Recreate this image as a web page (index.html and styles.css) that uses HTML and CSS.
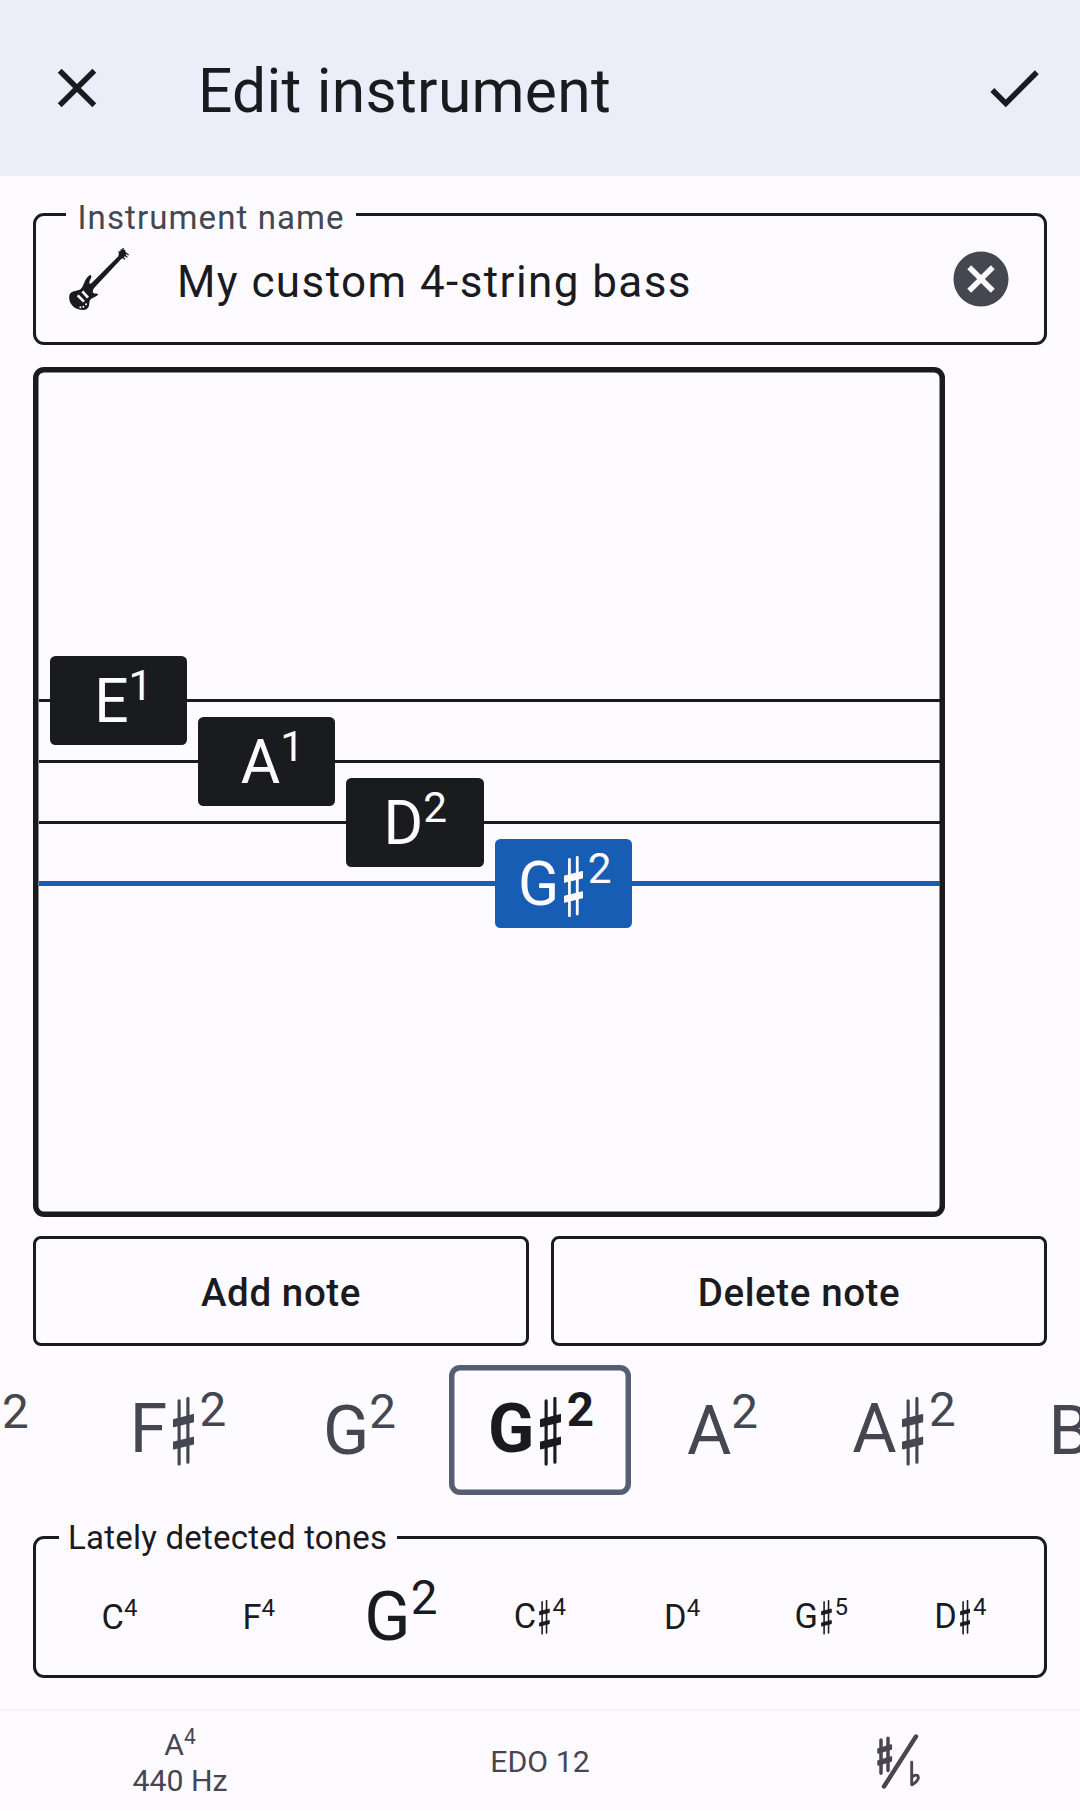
FILE: index.html
```html
<!DOCTYPE html>
<html lang="en">
<head>
<meta charset="utf-8">
<title>Edit instrument</title>
<link rel="stylesheet" href="styles.css">
</head>
<body>
<svg class="defs" aria-hidden="true">
  <symbol id="sharp" viewBox="0 0 57 182" preserveAspectRatio="none">
    <path d="M16.3 10V178M39.7 4V173" fill="none" stroke="currentColor" stroke-width="8.4" stroke-linecap="round"/>
    <path d="M2 60L55 47V65L2 78ZM2 120L55 107V124L2 137Z" fill="currentColor" stroke="currentColor" stroke-width="4" stroke-linejoin="round"/>
  </symbol>
</svg>
<div class="screen">
  <header class="app-bar">
    <svg class="icon" viewBox="0 0 24 24"><path d="M19 6.41L17.59 5 12 10.59 6.41 5 5 6.41 10.59 12 5 17.59 6.41 19 12 13.41 17.59 19 19 17.59 13.41 12z"/></svg>
    <h1 class="title">Edit instrument</h1>
    <svg class="icon" viewBox="0 0 24 24"><path d="M9 16.17L4.83 12l-1.42 1.41L9 19 21 7l-1.41-1.41z"/></svg>
  </header>

  <main class="content">
    <section class="field">
      <span class="field-label">Instrument name</span>
      <svg class="guitar" viewBox="48 47 198 198">
        <path d="M122 134C117 134 110 143 106 150C101 160 99 170 92 176C84 182 68 181 61 189C55 197 57 212 64 222C71 233 85 239 98 239C108 239 115 234 117 226C119 217 117 211 123 206C129 202 139 200 145 192C142 188 133 191 129 187C127 183 129 178 133 172L213 87L223 80L229 70L225 59L217 57L207 66L205 78L125 158C121 162 117 160 118 155C119 149 125 143 124 137Z"/>
        <path class="guitar-tuners" d="M206 63l4 5M212 57l4 5M218 53l3 5M228 68l8 6M224 74l8 7M217 80l8 7"/>
        <path class="guitar-cut" d="M97 183L114 202M83 195L102 214"/>
        <path class="guitar-dots" d="M91 231h.1M100 229h.1M108 222h.1"/>
      </svg>
      <span class="field-value">My custom 4-string bass</span>
      <svg class="icon clear" viewBox="0 0 24 24"><path d="M12 2C6.47 2 2 6.47 2 12s4.47 10 10 10 10-4.47 10-10S17.53 2 12 2zm5 13.59L15.59 17 12 13.41 8.41 17 7 15.59 10.59 12 7 8.41 8.41 7 12 10.59 15.59 7 17 8.41 13.41 12 17 15.59z"/></svg>
    </section>

    <section class="strings">
      <div class="string s1"><span class="chip"><span class="note">E<sup>1</sup></span></span></div>
      <div class="string s2"><span class="chip"><span class="note">A<sup>1</sup></span></span></div>
      <div class="string s3"><span class="chip"><span class="note">D<sup>2</sup></span></span></div>
      <div class="string s4 active"><span class="chip"><span class="note">G<svg class="sharp"><use href="#sharp"/></svg><sup>2</sup></span></span></div>
    </section>

    <div class="buttons">
      <button class="button">Add note</button>
      <button class="button">Delete note</button>
    </div>
  </main>

  <section class="picker">
    <div class="pick"><span class="note">F<sup>2</sup></span></div>
    <div class="pick"><span class="note">F<svg class="sharp"><use href="#sharp"/></svg><sup>2</sup></span></div>
    <div class="pick"><span class="note">G<sup>2</sup></span></div>
    <div class="pick selected"><span class="note">G<svg class="sharp"><use href="#sharp"/></svg><sup>2</sup></span></div>
    <div class="pick"><span class="note">A<sup>2</sup></span></div>
    <div class="pick"><span class="note">A<svg class="sharp"><use href="#sharp"/></svg><sup>2</sup></span></div>
    <div class="pick last"><span class="note">B<sup>2</sup></span></div>
  </section>

  <section class="detected">
    <span class="detected-label">Lately detected tones</span>
    <div class="tone"><span class="note">C<sup>4</sup></span></div>
    <div class="tone"><span class="note">F<sup>4</sup></span></div>
    <div class="tone large"><span class="note">G<sup>2</sup></span></div>
    <div class="tone"><span class="note">C<svg class="sharp"><use href="#sharp"/></svg><sup>4</sup></span></div>
    <div class="tone"><span class="note">D<sup>4</sup></span></div>
    <div class="tone"><span class="note">G<svg class="sharp"><use href="#sharp"/></svg><sup>5</sup></span></div>
    <div class="tone"><span class="note">D<svg class="sharp"><use href="#sharp"/></svg><sup>4</sup></span></div>
  </section>

  <footer class="bottom-bar">
    <div class="setting reference"><span class="note">A<sup>4</sup></span><span>440 Hz</span></div>
    <div class="setting">EDO 12</div>
    <div class="setting">
      <svg class="accidental" viewBox="0 0 66 66">
        <path d="M14 12V45.2M21 10.2V42.5" stroke-width="3.5"/>
        <path d="M11.2 21.2L24.2 17.2V20.8L11.2 24.8ZM11.2 33L24.2 29V32.8L11.2 36.8Z" fill="currentColor" stroke-width="1.8"/>
        <path d="M17 58.5L49 8.5" stroke-width="4.4"/>
        <path d="M44.7 34.2V56.8C48 55.5 51.6 52 51.3 49.3C51 46.2 47 46.6 45 49.5" stroke-width="2.9"/>
      </svg>
    </div>
  </footer>
</div>
</body>
</html>
```
FILE: styles.css
```css
* { box-sizing: border-box; }

body {
  margin: 0;
  background: #fdfbff;
  color: #1a1b1f;
  font-family: Roboto, "Liberation Sans", sans-serif;
}

.defs { display: none; }

.screen {
  display: flex;
  flex-direction: column;
  width: 1080px;
  height: 1810px;
  overflow: hidden;
}

.icon {
  flex: none;
  width: 66px;
  height: 66px;
  fill: currentColor;
}

/* Note name with optional sharp and a raised octave number */
.note {
  line-height: 1;
  white-space: nowrap;
}

.note sup {
  font-size: 0.7em;
  line-height: 0;
  vertical-align: 0.52em;
}

.sharp {
  width: 0.315em;
  height: 1.01em;
  margin: 0 0.08em;
  vertical-align: -0.2em;
}

.app-bar {
  display: flex;
  flex: none;
  align-items: center;
  height: 176px;
  padding: 0 33px 0 44px;
  background: #ebedf9;
}

.title {
  flex: 1;
  margin: 0 0 0 88px;
  padding-top: 7px;
  font-size: 60.5px;
  font-weight: 400;
  line-height: 77px;
  letter-spacing: 0.28px;
}

.content {
  display: flex;
  flex-direction: column;
  flex: none;
  padding: 37px 33px 0;
}

.field {
  position: relative;
  display: flex;
  align-items: center;
  height: 132px;
  padding: 0 30px;
  border: 3px solid #1a1b1f;
  border-radius: 11px;
}

.field-label {
  position: absolute;
  top: -20px;
  left: 30px;
  width: 290px;
  padding-left: 11.5px;
  background: #fdfbff;
  color: #44474f;
  font-size: 33px;
  line-height: 44px;
  letter-spacing: 1.1px;
}

.guitar {
  flex: none;
  width: 66px;
  height: 66px;
  fill: currentColor;
}

.guitar-tuners { stroke: currentColor; stroke-width: 4; }
.guitar-cut { stroke: #fdfbff; stroke-width: 8; }
.guitar-dots { stroke: #fdfbff; stroke-width: 6; stroke-linecap: round; }

.field-value {
  flex: 1;
  margin: 5px 0 0 45px;
  font-size: 44px;
  line-height: 60px;
  letter-spacing: 1.42px;
}

.clear { color: #44474f; }

/* Canvas that holds the strings */
.strings {
  position: relative;
  width: 912px;
  height: 850px;
  margin-top: 22px;
  border-radius: 11px;
  box-shadow: inset 0 0 0 5.5px #1a1b1f;
}

.string {
  position: absolute;
  left: 6px;
  right: 5px;
  height: 3px;
  background: #1a1b1f;
}

.s1 { top: 332px; }
.s2 { top: 393px; }
.s3 { top: 454px; }
.s4 { top: 514px; }

.chip {
  position: absolute;
  top: -43px;
  left: 10.5px;
  display: flex;
  align-items: center;
  justify-content: center;
  width: 137.5px;
  height: 89px;
  padding: 4px 0 0 1px;
  border-radius: 5.5px;
  background: #1a1b1f;
  color: #fdfbff;
  font-size: 60.5px;
}

.s1 .chip { padding-left: 10px; }
.s2 .chip { left: 158.7px; padding-left: 12px; }
.s3 .chip { left: 307px; }
.s4 .chip { left: 455.5px; top: -42px; padding: 6px 0 0 3px; }

.active { height: 5px; }
.active, .active .chip { background: #185db4; }

.buttons {
  display: grid;
  grid-template-columns: 1fr 1fr;
  gap: 22px;
  margin-top: 19px;
}

.button {
  height: 110px;
  padding: 4px 0 0;
  border: 3px solid #1a1b1f;
  border-radius: 8px;
  background: none;
  color: inherit;
  font: 500 38.5px/52px Roboto, "Liberation Sans", sans-serif;
  letter-spacing: 0.6px;
}

.picker {
  display: flex;
  flex: none;
  justify-content: center;
  height: 130px;
  margin-top: 19px;
}

.pick {
  display: flex;
  flex: none;
  align-items: center;
  justify-content: center;
  width: 181.5px;
  padding: 1px 0 0 2px;
  color: #44474f;
  font-size: 68px;
}

.pick.last { padding: 1px 3px 0 0; }

.pick sup, .large sup { vertical-align: 0.55em; }

.selected {
  border-radius: 11px;
  box-shadow: inset 0 0 0 5.5px #555f71;
  color: #1a1b1f;
  font-weight: 700;
}

.detected {
  position: relative;
  display: flex;
  flex: none;
  height: 142px;
  margin: 41px 33px 0;
  padding: 0 14px;
  border: 3px solid #1a1b1f;
  border-radius: 11px;
}

.detected-label {
  position: absolute;
  top: -21px;
  left: 23px;
  width: 338px;
  padding-left: 9px;
  background: #fdfbff;
  font-size: 33px;
  line-height: 40px;
  letter-spacing: 0.22px;
  white-space: nowrap;
}

.tone {
  display: flex;
  flex: 1 1 0;
  align-items: center;
  justify-content: center;
  min-width: 0;
  padding-top: 20px;
  font-size: 34.4px;
}

.tone.large {
  padding-left: 3px;
  font-size: 68px;
}

.tone.large + .tone { padding-right: 3px; }

.bottom-bar {
  display: grid;
  flex: none;
  grid-template-columns: repeat(3, 1fr);
  height: 101px;
  margin-top: 31px;
  border-top: 2px solid #f4f2f9;
  color: #49454f;
  font-size: 30.25px;
  line-height: 36px;
}

.setting {
  display: flex;
  flex-direction: column;
  align-items: center;
  justify-content: center;
  padding-top: 3px;
}

.setting.reference { padding-top: 5px; }

.setting .note { line-height: 36px; }

.accidental {
  width: 66px;
  height: 66px;
  margin-top: -3px;
  fill: none;
  stroke: currentColor;
  stroke-linecap: round;
  stroke-linejoin: round;
}
```
